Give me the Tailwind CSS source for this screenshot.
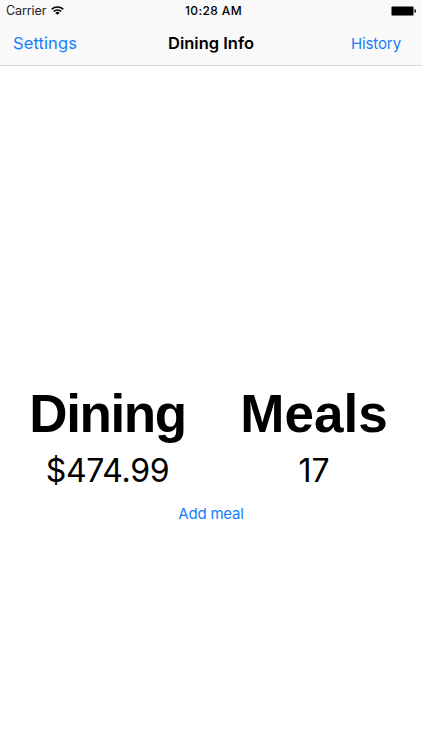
<!DOCTYPE html>
<html lang="en">
<head>
  <meta charset="UTF-8" />
  <meta name="viewport" content="width=device-width, initial-scale=1" />
  <title>Dining Info</title>
  <script src="https://cdn.jsdelivr.net/npm/@tailwindcss/browser@4"></script>
  <style>
    body {
      font-family: Inter, 'Liberation Sans', sans-serif;
    }
  </style>
</head>
<body class="h-screen flex flex-col bg-white text-black overflow-hidden">

  <header class="h-[66px] shrink-0 bg-[#f9f9f9] border-b border-[#d8d8da]">
    <!-- Status Bar -->
    <div class="grid grid-cols-3 items-center h-[22px] pl-[6px] pr-[5px] leading-none">
      <div class="flex items-center gap-[5px]">
        <span class="text-[12.5px] tracking-[-0.1px] text-[#222]">Carrier</span>
        <svg class="w-[13px] h-[9px] mb-[1px]" viewBox="0 0 13 10" preserveAspectRatio="none" fill="none" stroke="#000" stroke-width="1.7">
          <path d="M0.7 3.6a8.2 8.2 0 0 1 11.6 0" />
          <path d="M2.8 6a5.2 5.2 0 0 1 7.4 0" />
          <path d="M6.5 9.8L4.3 7.7a3 3 0 0 1 4.4 0z" fill="#000" stroke="none" />
        </svg>
      </div>
      <span class="text-center text-[12px] font-medium tracking-[0.4px] pl-[4px]">10:28 AM</span>
      <svg class="w-[26px] h-[10px] justify-self-end" viewBox="0 0 26 10">
        <rect x="0.5" y="0.5" width="22" height="9" rx="1" fill="#000" stroke="#777" stroke-width="0.6" />
        <path d="M23.4 3.2h0.6a1 1 0 0 1 1 1v1.6a1 1 0 0 1-1 1h-0.6z" fill="#222" />
      </svg>
    </div>

    <!-- Navigation Bar -->
    <nav class="grid grid-cols-3 items-center h-[43px] pl-[13px] pr-[21px] leading-none">
      <a href="#" class="text-[16.5px] tracking-[0.1px] text-[#157efb]">Settings</a>
      <h1 class="text-[16.5px] font-semibold text-center whitespace-nowrap pl-[8px]">Dining Info</h1>
      <a href="#" class="text-[15px] tracking-[-0.1px] text-[#157efb] text-right">History</a>
    </nav>
  </header>

  <!-- Balances -->
  <main class="flex flex-col items-center pt-[317px]">
    <div class="grid grid-cols-2 w-full text-center">
      <section class="pl-[4px]">
        <h2 class="font-['Liberation_Sans'] font-bold text-[53px] leading-[62px] tracking-[-1.4px]">Dining</h2>
        <p class="text-[32px] leading-[52px] tracking-[-0.3px]">$474.99</p>
      </section>
      <section class="pr-[5px]">
        <h2 class="font-['Liberation_Sans'] font-bold text-[53px] leading-[62px]">Meals</h2>
        <p class="text-[32px] leading-[52px]">17</p>
      </section>
    </div>
    <a href="#" class="mt-[7px] text-[15px] leading-[20px] tracking-[-0.2px] text-[#157efb]">Add meal</a>
  </main>

</body>
</html>
